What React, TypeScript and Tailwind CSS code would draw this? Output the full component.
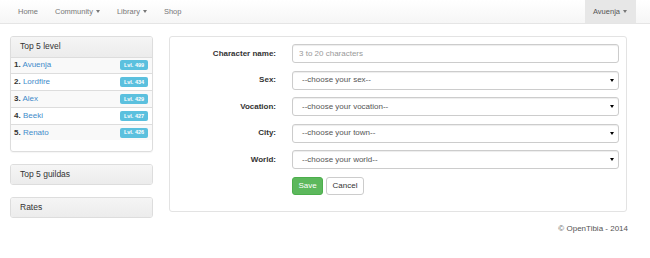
import React from "react";

const Caret = () => (
	<span className="inline-block ml-[3px] align-middle border-t-[3px] border-x-[2.5px] border-t-[#777] border-x-transparent" />
);

const players = [
	{ name: "Avuenja", lvl: 499 },
	{ name: "Lordfire", lvl: 434 },
	{ name: "Alex", lvl: 429 },
	{ name: "Beeki", lvl: 427 },
	{ name: "Renato", lvl: 426 },
];

const selects = [
	{ label: "Sex:", text: "--choose your sex--" },
	{ label: "Vocation:", text: "--choose your vocation--" },
	{ label: "City:", text: "--choose your town--" },
	{ label: "World:", text: "--choose your world--" },
];

const PanelHead = ({ title }: { title: string }) => (
	<div className="h-[19.5px] flex items-center pl-[9px] bg-gradient-to-b from-[#f5f5f5] to-[#ececec] text-[8.5px] text-[#333]">
		{title}
	</div>
);

export default function App() {
	return (
		<div className="w-[650px] h-[258px] bg-white font-['Liberation_Sans',Arial,sans-serif] text-[#333] overflow-hidden">
			{/* Navbar */}
			<nav className="h-[24px] flex items-center justify-between bg-gradient-to-b from-white to-[#f6f6f6] border-b border-[#e5e5e5] text-[7.5px] text-[#777]">
				<ul className="flex items-center pl-[9.5px]">
					<li className="px-[8.5px]">Home</li>
					<li className="px-[8.5px] flex items-center">
						Community <Caret />
					</li>
					<li className="px-[8.5px] flex items-center">
						Library <Caret />
					</li>
					<li className="px-[8.5px]">Shop</li>
				</ul>
				<div className="mr-[14px] h-full w-[51px] pl-[8px] flex items-center bg-[#e7e7e7] text-[#555]">
					Avuenja <Caret />
				</div>
			</nav>

			{/* Content */}
			<div className="flex items-start gap-[16px] pl-[10px] mt-[12px]">
				{/* Left column */}
				<div className="w-[143px] flex flex-col">
					<div className="border border-[#ddd] rounded-[3px] shadow-[0_1px_1px_rgba(0,0,0,0.04)] overflow-hidden mb-[11.5px] pb-[11px]">
						<PanelHead title="Top 5 level" />
						{players.map((p, i) => (
							<div
								key={p.name}
								className={`h-[16.8px] flex items-center justify-between border-t border-[#ddd] pl-[3px] pr-[4px] text-[8px] ${
									i % 2 === 0 ? "bg-[#f9f9f9]" : "bg-white"
								}`}
							>
								<span>
									<b>{i + 1}.</b> <span className="text-[#428bca]">{p.name}</span>
								</span>
								<span className="w-[28px] h-[10px] flex items-center justify-center rounded-[2px] bg-[#5bc0de] text-white font-bold text-[5.5px]">
									Lvl. {p.lvl}
								</span>
							</div>
						))}
					</div>
					<div className="border border-[#ddd] rounded-[3px] overflow-hidden mb-[11.5px]">
						<PanelHead title="Top 5 guildas" />
					</div>
					<div className="border border-[#ddd] rounded-[3px] overflow-hidden">
						<PanelHead title="Rates" />
					</div>
				</div>

				{/* Form panel */}
				<div className="w-[458px] h-[176px] border border-[#e3e3e3] rounded-[3px] pt-[7px] px-[7px] flex flex-col gap-[7.6px] text-[8px]">
					<div className="flex items-center">
						<label className="w-[99px] text-right font-bold mr-[16px]">Character name:</label>
						<input
							className="w-[327px] h-[19px] border border-[#ccc] rounded-[3px] pl-[6px] text-[8px] text-[#555] placeholder:text-[#999] shadow-[inset_0_1px_1px_rgba(0,0,0,0.075)] outline-none"
							placeholder="3 to 20 characters"
						/>
					</div>
					{selects.map((s) => (
						<div key={s.label} className="flex items-center">
							<label className="w-[99px] text-right font-bold mr-[16px]">{s.label}</label>
							<div className="w-[327px] h-[19px] border border-[#ccc] rounded-[3px] pl-[9px] pr-[4px] flex items-center justify-between text-[#555] shadow-[inset_0_1px_1px_rgba(0,0,0,0.075)]">
								<span>{s.text}</span>
								<span className="border-t-[3px] border-x-[2px] border-t-black border-x-transparent" />
							</div>
						</div>
					))}
					<div className="flex items-center pl-[115px] gap-[3px]">
						<button className="w-[31px] h-[18px] rounded-[3px] bg-[#5cb85c] border border-[#4cae4c] text-white text-[8px]">
							Save
						</button>
						<button className="w-[38px] h-[18px] rounded-[3px] bg-white border border-[#ccc] text-[#333] text-[8px]">
							Cancel
						</button>
					</div>
				</div>
			</div>

			{/* Footer */}
			<div className="w-[628px] text-right mt-[5px] text-[8px] text-[#555]">© OpenTibia - 2014</div>
		</div>
	);
}
